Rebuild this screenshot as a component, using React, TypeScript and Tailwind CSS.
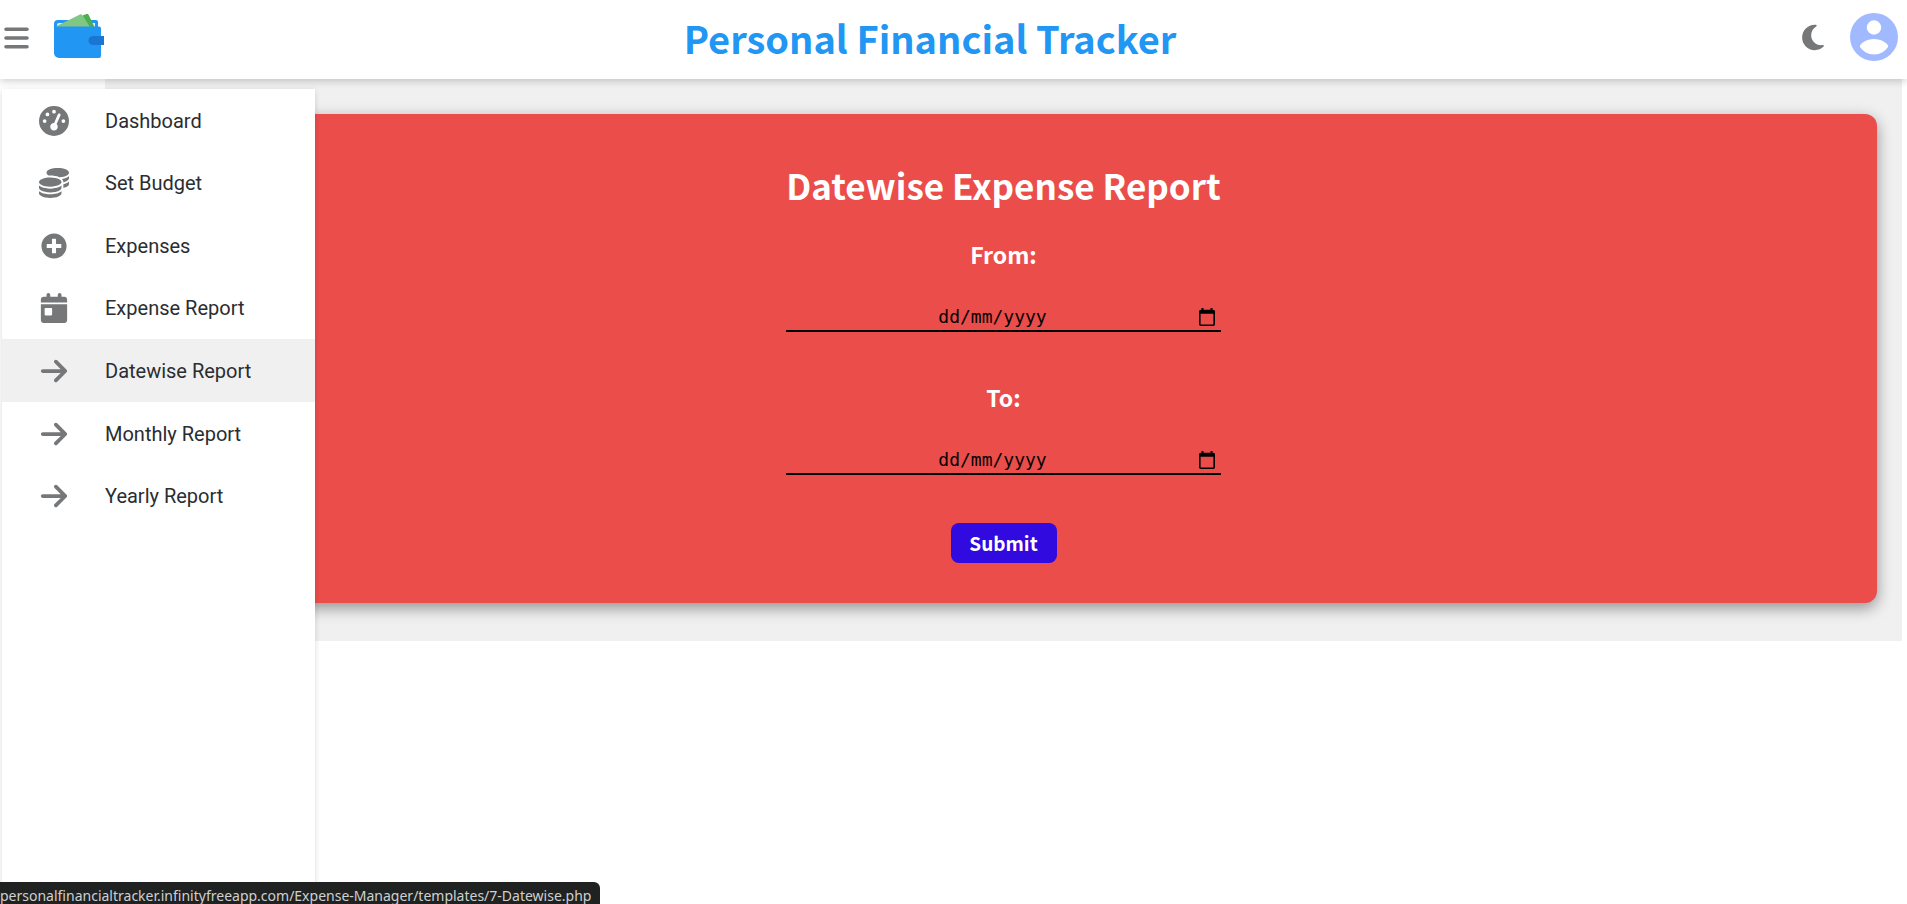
import type { ComponentType } from "react";
import { FaArrowRight, FaBars, FaCalendarDay, FaCoins, FaGaugeHigh, FaMoon } from "react-icons/fa6";
import { FaPlusCircle } from "react-icons/fa";

type NavItem = {
  label: string;
  icon: ComponentType<{ className?: string }>;
  iconClass: string;
  active?: boolean;
};

const navItems: NavItem[] = [
  { label: "Dashboard", icon: FaGaugeHigh, iconClass: "size-[30px]" },
  { label: "Set Budget", icon: FaCoins, iconClass: "size-[30px]" },
  { label: "Expenses", icon: FaPlusCircle, iconClass: "size-[26px]" },
  { label: "Expense Report", icon: FaCalendarDay, iconClass: "size-[30px]" },
  { label: "Datewise Report", icon: FaArrowRight, iconClass: "size-[30px]", active: true },
  { label: "Monthly Report", icon: FaArrowRight, iconClass: "size-[30px]" },
  { label: "Yearly Report", icon: FaArrowRight, iconClass: "size-[30px]" },
];

function WalletLogo() {
  return (
    <svg viewBox="0 0 50 44" className="h-11 w-[50px]" aria-hidden="true">
      <path d="M0 12V10a4 4 0 0 1 4-4H42a2 2 0 0 1 2 2v5H0z" fill="#2196f3" />
      <path d="M3 12V11a2 2 0 0 1 2-2H41v4H3z" fill="#e3f2fd" />
      <path d="M28.500 1.500L32.500 0Q34 -0.500 34.700 1L40.500 13H34z" fill="#4caf50" />
      <path d="M2.500 12L26 0.500Q27.500 -0.300 28.300 1.200L36 13H2.500z" fill="#81c784" />
      <path d="M0 10Q0 12.500 3 12.500H45a2 2 0 0 1 2 2V42a2 2 0 0 1-2 2H5a5 5 0 0 1-5-5z" fill="#2196f3" />
      <path d="M50 22v9H39a4.500 4.500 0 0 1 0-9z" fill="#1976d2" />
    </svg>
  );
}

function Avatar() {
  return (
    <svg viewBox="0 0 48 48" className="size-12" aria-hidden="true">
      <circle cx="24" cy="24" r="24" fill="#a0b9ff" />
      <circle cx="24" cy="14.500" r="7.200" fill="#fff" />
      <path d="M10 34C9 30.500 17 26 24 26S39 30.500 38 34C35 38.500 30 41.500 24 41.500S13 38.500 10 34z" fill="#fff" />
    </svg>
  );
}

function DateField({ id, label }: { id: string; label: string }) {
  return (
    <div className="flex w-full flex-col items-center gap-[30px]">
      <label htmlFor={id} className="text-[23px] leading-9 font-bold text-white">
        {label}
      </label>
      <div className="flex h-[30px] w-full items-center border-b-2 border-black pt-0.5 pr-1.5">
        <input
          id={id}
          type="text"
          placeholder="dd/mm/yyyy"
          className="min-w-0 flex-1 bg-transparent text-center font-['DejaVu_Sans_Mono',monospace] text-lg leading-6 text-black outline-none placeholder:text-black"
        />
        <button type="button" aria-label={`Choose date: ${label}`}>
          <svg viewBox="0 0 16 18" className="h-[18px] w-4" fill="none" stroke="#000" aria-hidden="true">
            <path d="M3.500 0v3M12.500 0v3" strokeWidth="2" />
            <rect x="0.800" y="2.500" width="14.400" height="14.700" rx="1" strokeWidth="1.600" />
            <path d="M1 4h14" strokeWidth="3.500" />
          </svg>
        </button>
      </div>
    </div>
  );
}

export default function App() {
  return (
    <div className="flex h-screen flex-col overflow-hidden bg-white font-['Noto_Sans_CJK_SC','Open_Sans',sans-serif]">
      <header className="relative z-10 flex h-[79px] shrink-0 items-center bg-white pr-[9px] pl-1 shadow-[0_2px_8px_rgba(0,0,0,0.2)]">
        <div className="flex flex-1 items-center gap-[25px] pb-1">
          <button type="button" aria-label="Toggle menu" className="text-[#757778]">
            <FaBars className="h-7 w-[25px]" />
          </button>
          <a href="#home" aria-label="Home" className="pb-[3px]">
            <WalletLogo />
          </a>
        </div>
        <h1 className="mr-[42px] pb-1 text-[38px] leading-[60px] font-bold text-[#2196f3]">Personal Financial Tracker</h1>
        <div className="flex flex-1 items-center justify-end gap-[26px] pb-1">
          <button type="button" aria-label="Dark mode" className="text-[#757778]">
            <FaMoon className="h-[29px] w-[22px]" />
          </button>
          <a href="#profile" aria-label="Profile" className="pb-0.5">
            <Avatar />
          </a>
        </div>
      </header>

      <div className="flex min-h-0 flex-1">
        <div className="relative w-[105px] shrink-0 bg-white">
          <nav className="absolute top-[10px] bottom-0 left-[2px] z-10 w-[313px] bg-white shadow-[0_2px_6px_rgba(0,0,0,0.15)]">
            <ul className="grid h-[438px] auto-rows-fr">
              {navItems.map(({ label, icon: Icon, iconClass, active }) => (
                <li key={label}>
                  <a
                    href={`#${label.toLowerCase().replace(" ", "-")}`}
                    className={`flex h-full items-center pt-px font-['Roboto',sans-serif] text-xl text-[#2a2d31] ${active ? "bg-[#f0f0f0]" : ""}`}
                  >
                    <span className="flex w-[103px] justify-center text-[#757778]">
                      <Icon className={iconClass} />
                    </span>
                    {label}
                  </a>
                </li>
              ))}
            </ul>
          </nav>
        </div>

        <main className="mr-[5px] flex-1 self-start bg-[#f0f0f0] px-[25px] pt-[35px] pb-[38px]">
          <form className="flex flex-col items-center rounded-xl bg-[#eb4d4b] pt-[41px] pb-10 shadow-[0_5px_15px_rgba(0,0,0,0.4)]">
            <div className="flex flex-col items-center">
              <h2 className="text-[35px] leading-[60px] font-bold text-white">Datewise Expense Report</h2>
              <div className="mt-[21px] flex w-full flex-col gap-[47px]">
                <DateField id="from-date" label="From:" />
                <DateField id="to-date" label="To:" />
              </div>
              <button
                type="submit"
                className="mt-12 h-10 w-[106px] rounded-lg bg-[#300adf] text-[19px] leading-10 font-bold text-white"
              >
                Submit
              </button>
            </div>
          </form>
        </main>
      </div>

      <div className="fixed bottom-0 left-0 z-20 h-[22px] w-[600px] overflow-hidden rounded-tr-md bg-[#202222] font-['Noto_Sans',sans-serif] text-sm leading-7 whitespace-nowrap text-[#cfd0d0]">
        personalfinancialtracker.infinityfreeapp.com/Expense-Manager/templates/7-Datewise.php
      </div>
    </div>
  );
}
